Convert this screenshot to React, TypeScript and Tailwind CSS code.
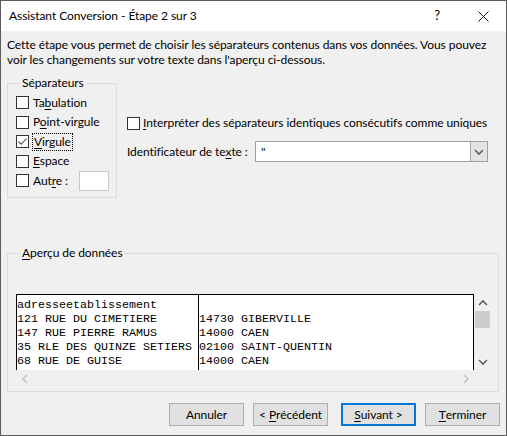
import React from "react";

const U = ({ children }: { children: React.ReactNode }) => (
  <span className="underline decoration-1 underline-offset-[2px]">{children}</span>
);

function Box({ checked }: { checked?: boolean }) {
  return (
    <span className="w-[13px] h-[13px] border border-[#333333] bg-white flex items-center justify-center shrink-0">
      {checked && (
        <svg width="11" height="11" viewBox="0 0 11 11">
          <path d="M1.5 5.5 L4.2 8.2 L9.5 2.5" stroke="#555555" fill="none" strokeWidth="1.1" />
        </svg>
      )}
    </span>
  );
}

function Chevron({ dir, color }: { dir: "up" | "down" | "left" | "right"; color: string }) {
  const d =
    dir === "up"
      ? "M1 6 L5 2 L9 6"
      : dir === "down"
      ? "M1 2 L5 6 L9 2"
      : dir === "left"
      ? "M6 1 L2 5 L6 9"
      : "M2 1 L6 5 L2 9";
  const w = dir === "up" || dir === "down" ? 10 : 8;
  const h = dir === "up" || dir === "down" ? 8 : 10;
  return (
    <svg width={w} height={h} viewBox={`0 0 ${w} ${h}`}>
      <path d={d} stroke={color} strokeWidth="1.6" fill="none" />
    </svg>
  );
}

const rows: [string, string][] = [
  ["adresseetablissement", ""],
  ["121 RUE DU CIMETIERE", "14730 GIBERVILLE"],
  ["147 RUE PIERRE RAMUS", "14000 CAEN"],
  ["35 RLE DES QUINZE SETIERS", "02100 SAINT-QUENTIN"],
  ["68 RUE DE GUISE", "14000 CAEN"],
];

export default function App() {
  return (
    <div className="w-[507px] h-[436px] border border-[#5c5c5c] bg-[#f0f0f0] flex flex-col font-['Lato',sans-serif] text-[12px] tracking-[-0.07px] text-black overflow-hidden whitespace-nowrap">
      {/* Title bar */}
      <div className="h-[30px] bg-white flex items-center shrink-0">
        <div className="flex-1 pl-[8px] leading-[16px]">Assistant Conversion - Étape 2 sur 3</div>
        <div className="w-[46px] h-[30px] flex items-center justify-center text-[13px]">?</div>
        <div className="w-[46px] h-[30px] flex items-center justify-center">
          <svg width="11" height="11" viewBox="0 0 11 11">
            <path d="M0.5 0.5 L10.5 10.5 M10.5 0.5 L0.5 10.5" stroke="#111" strokeWidth="1" />
          </svg>
        </div>
      </div>

      {/* Description */}
      <div className="px-[6px] pt-[6px] leading-[15px]">
        Cette étape vous permet de choisir les séparateurs contenus dans vos données. Vous pouvez
        <br />
        voir les changements sur votre texte dans l'aperçu ci-dessous.
      </div>

      {/* Options row */}
      <div className="flex mt-[8px] ml-[6px]">
        <fieldset className="w-[110px] h-[123px] border border-[#dcdcdc] pl-[8px] shrink-0">
          <legend className="ml-[5px] px-[1px] leading-[16px]">Séparateurs</legend>
          <div className="flex flex-col pt-[2px]">
            <div className="h-[19.5px] flex items-center gap-[4px]">
              <Box />
              <span>
                Ta<U>b</U>ulation
              </span>
            </div>
            <div className="h-[19.5px] flex items-center gap-[4px]">
              <Box />
              <span>
                P<U>o</U>int-virgule
              </span>
            </div>
            <div className="h-[19.5px] flex items-center gap-[3px]">
              <Box checked />
              <span className="border border-dotted border-black px-[1px] leading-[16px]">
                <U>V</U>irgule
              </span>
            </div>
            <div className="h-[19.5px] flex items-center gap-[4px]">
              <Box />
              <span>
                <U>E</U>space
              </span>
            </div>
            <div className="h-[19.5px] flex items-center">
              <Box />
              <span className="ml-[4px] w-[46px]">
                Aut<U>r</U>e :
              </span>
              <span className="w-[30px] h-[20px] bg-white border border-[#c8c8c8]" />
            </div>
          </div>
        </fieldset>

        <div className="ml-[10px] pt-[38px] flex flex-col">
          <div className="h-[20px] flex items-center gap-[3px]">
            <Box />
            <span>
              <U>I</U>nterpréter des séparateurs identiques consécutifs comme uniques
            </span>
          </div>
          <div className="mt-[8px] flex items-center">
            <span className="w-[128px] shrink-0">
              Identificateur de te<U>x</U>te :
            </span>
            <div className="w-[233px] h-[21px] border border-[#a0a0a0] bg-white flex shrink-0">
              <div className="flex-1 pl-[5px] leading-[19px]">"</div>
              <div className="w-[17px] h-full bg-[#e3e3e3] border-l border-[#a8a8a8] flex items-center justify-center">
                <Chevron dir="down" color="#606060" />
              </div>
            </div>
          </div>
        </div>
      </div>

      {/* Preview */}
      <fieldset className="mt-[47px] ml-[6px] w-[492px] h-[147px] border border-[#dcdcdc] pl-[8px] pt-[33px] shrink-0">
        <legend className="ml-[5px] px-[1px] leading-[16px]">
          <U>A</U>perçu de données
        </legend>
        <div className="flex">
          <div className="w-[458px] h-[76px] bg-white border-t border-l border-r border-black flex overflow-hidden font-['Liberation_Mono',monospace] text-[11.67px] tracking-normal leading-[14px]">
            <div className="w-[182px] shrink-0 border-r border-black pt-[3px]">
              {rows.map((r, i) => (
                <div key={i} className="h-[14px] whitespace-pre">
                  {r[0]}
                </div>
              ))}
            </div>
            <div className="flex-1 pt-[3px]">
              {rows.map((r, i) => (
                <div key={i} className="h-[14px] whitespace-pre">
                  {r[1]}
                </div>
              ))}
            </div>
          </div>
          <div className="w-[17px] h-[76px] flex flex-col">
            <div className="h-[17px] flex items-center justify-center">
              <Chevron dir="up" color="#606060" />
            </div>
            <div className="h-[17px] mx-[1px] bg-[#cdcdcd]" />
            <div className="flex-1" />
            <div className="h-[17px] flex items-center justify-center">
              <Chevron dir="down" color="#606060" />
            </div>
          </div>
        </div>
        <div className="w-[458px] h-[17px] flex justify-between">
          <div className="w-[17px] h-[17px] flex items-center justify-center">
            <Chevron dir="left" color="#c2c2c2" />
          </div>
          <div className="w-[17px] h-[17px] flex items-center justify-center">
            <Chevron dir="right" color="#c2c2c2" />
          </div>
        </div>
      </fieldset>

      {/* Buttons */}
      <div className="mt-[11px] flex justify-end pr-[6px]">
        <div className="w-[75px] h-[23px] bg-[#e1e1e1] border border-[#adadad] flex items-center justify-center">
          Annuler
        </div>
        <div className="ml-[9px] w-[75px] h-[23px] bg-[#e1e1e1] border border-[#adadad] flex items-center justify-center whitespace-pre">
          &lt; <U>P</U>récédent
        </div>
        <div className="ml-[13px] w-[75px] h-[23px] bg-[#e1e1e1] border-2 border-[#0078d7] flex items-center justify-center whitespace-pre">
          <U>S</U>uivant &gt;
        </div>
        <div className="ml-[9px] w-[75px] h-[23px] bg-[#e1e1e1] border border-[#adadad] flex items-center justify-center">
          <U>T</U>erminer
        </div>
      </div>
    </div>
  );
}
